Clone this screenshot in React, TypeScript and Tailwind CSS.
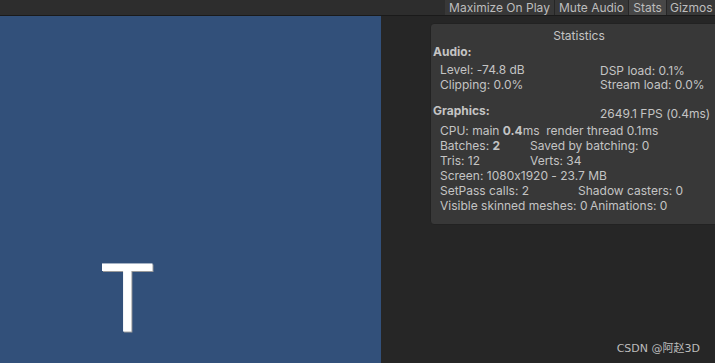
const font = { fontFamily: 'Inter, "Noto Sans", sans-serif' };

function Row({ children, className = '' }: { children: React.ReactNode; className?: string }) {
  return <div className={`flex h-[15px] items-center whitespace-nowrap ${className}`}>{children}</div>;
}

export default function App() {
  return (
    <div
      className="relative flex h-[363px] w-[715px] flex-col overflow-hidden bg-[#262626] text-[12px] text-[#c4c4c4] [font-feature-settings:'calt'_0]"
      style={font}
    >
      {/* toolbar */}
      <div className="flex h-[15px] shrink-0 justify-end bg-[#2d2d2d]">
        <div className="flex h-[15px] leading-[15px] text-[#bdbdbd]">
          <button className="w-[110px] border-r border-[#262626] bg-[#383838] text-center">Maximize On Play</button>
          <button className="w-[74px] border-r border-[#262626] bg-[#383838] text-center">Mute Audio</button>
          <button className="w-[38px] border-r border-[#262626] bg-[#474747] text-center">Stats</button>
          <button className="w-[48px] bg-[#383838] pl-[3px] text-left">Gizmos</button>
        </div>
      </div>
      <div className="h-px shrink-0 bg-[#1a1a1a]" />

      <div className="flex min-h-0 flex-1">
        {/* game view */}
        <div className="flex w-[381px] shrink-0 items-end bg-[#32507a] pb-[17px] pl-[100px]">
          <span
            className="inline-block origin-left scale-x-[0.91] text-[98px] leading-none text-white [text-shadow:1px_1px_0_#9a9a9a]"
            style={{ fontFamily: '"Liberation Sans", Arial, sans-serif' }}
          >
            T
          </span>
        </div>

        {/* right side */}
        <div className="relative flex-1 overflow-hidden pl-[49px] pt-[7px]">
          <div className="h-[202px] w-[330px] rounded-[4px] border border-[#222] bg-[#383838] px-[2px] pt-[3px]">
            <div className="h-[17px] w-[292px] text-center leading-[17px]">Statistics</div>
            <Row className="font-bold">Audio:</Row>
            <div className="mt-[3px] flex">
              <div className="w-[167px] pl-[7px]">
                <Row>Level: -74.8 dB</Row>
                <Row>Clipping: 0.0%</Row>
              </div>
              <div className="pt-[2px]">
                <div className="h-[14px] leading-[14px]">DSP load: 0.1%</div>
                <div className="h-[14px] leading-[14px]">Stream load: 0.0%</div>
              </div>
            </div>
            <div className="mt-[11px] flex">
              <Row className="w-[167px] font-bold">Graphics:</Row>
              <div className="pt-[2px]">2649.1 FPS (0.4ms)</div>
            </div>
            <div className="pl-[7px]">
              <Row>
                CPU: main&nbsp;<b>0.4</b>ms&nbsp;&nbsp;render thread 0.1ms
              </Row>
              <Row>
                <span className="w-[90px]">
                  Batches: <b>2</b>
                </span>
                <span>Saved by batching: 0</span>
              </Row>
              <Row>
                <span className="w-[90px]">Tris: 12</span>
                <span>Verts: 34</span>
              </Row>
              <Row>Screen: 1080x1920 - 23.7 MB</Row>
              <Row>
                <span className="w-[138px]">SetPass calls: 2</span>
                <span>Shadow casters: 0</span>
              </Row>
              <Row>
                <span className="w-[150px]">Visible skinned meshes: 0</span>
                <span>Animations: 0</span>
              </Row>
            </div>
          </div>

          <div
            className="absolute bottom-[6px] right-[15px] text-[11px] text-[#bcbcbc]"
            style={{ fontFamily: '"DejaVu Sans", "Noto Sans CJK SC", sans-serif' }}
          >
            CSDN @阿赵3D
          </div>
        </div>
      </div>
    </div>
  );
}
